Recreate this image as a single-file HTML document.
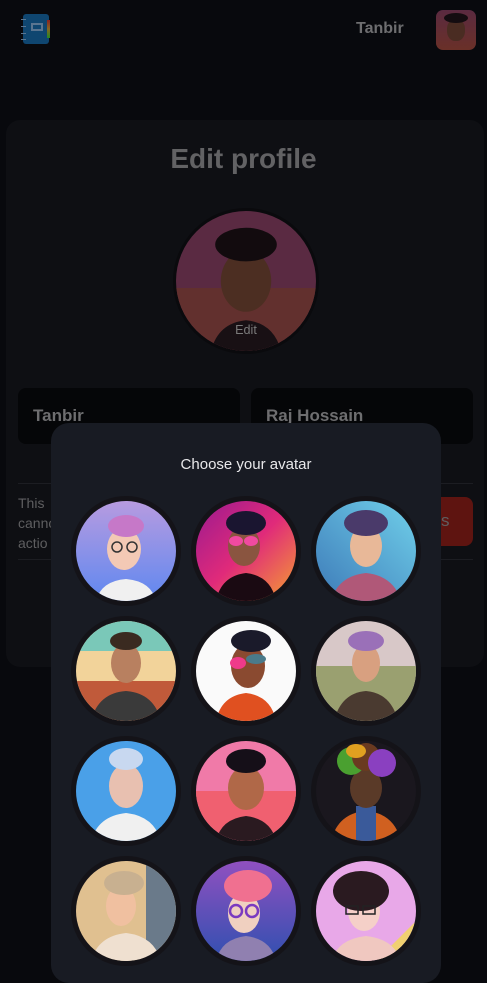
<!DOCTYPE html>
<html><head><meta charset="utf-8"><style>
*{margin:0;padding:0;box-sizing:border-box}
body{width:487px;height:963px;background:#08090d;font-family:"Liberation Sans",sans-serif;position:relative;overflow:hidden}
.abs{position:absolute}
.card{left:6px;top:120px;width:478px;height:547px;background:#0e0f13;border-radius:14px}
.inp{background:#050608;border-radius:8px;height:56px;top:388px;color:#6e6e70;font-weight:bold;font-size:17px;padding:18px 15px}
.line{height:1px;background:#1c1d22;left:18px;width:455px}
.modal{left:51px;top:423px;width:390px;height:560px;background:#181b23;border-radius:18px}
.av{position:absolute;width:110px;height:110px;border-radius:50%;background:#141318;padding:5px}
.av svg{width:100px;height:100px;display:block;border-radius:50%}
</style></head><body>
<!-- header -->
<div class="abs" style="left:23px;top:14px;width:26px;height:30px;background:#0f4670;border-radius:3px"></div>
<div class="abs" style="left:47px;top:20px;width:3px;height:18px;background:linear-gradient(#822,#862,#282)"></div>
<div class="abs" style="left:31px;top:23px;width:12px;height:8px;border:2px solid #5a7590"></div>
<div class="abs" style="left:21px;top:19px;width:5px;height:1px;background:#5a7590;box-shadow:0 7px #5a7590,0 14px #5a7590,0 20px #5a7590"></div>
<div class="abs" style="left:356px;top:20px;color:#6e6e70;font-weight:bold;font-size:16px">Tanbir</div>
<div class="abs" style="left:436px;top:10px;width:40px;height:40px;border-radius:7px;overflow:hidden;background:linear-gradient(#5a2a40,#6a3028)">
<div class="abs" style="left:11px;top:9px;width:18px;height:22px;border-radius:45%;background:#4a2c22"></div>
<div class="abs" style="left:8px;top:3px;width:24px;height:10px;border-radius:50%;background:#140c10"></div></div>
<!-- card -->
<div class="abs card"></div>
<div class="abs" style="left:0;width:487px;top:143px;text-align:center;color:#626264;font-weight:bold;font-size:28px">Edit profile</div>
<div class="abs" style="left:173px;top:208px;width:146px;height:146px;border-radius:50%;background:#0a0a0d;padding:3px">
<svg width="140" height="140" viewBox="0 0 100 100" style="border-radius:50%;display:block"><rect width="100" height="100" fill="#5a2a42"/><rect y="55" width="100" height="45" fill="#62302e"/><path d="M25 100 Q30 80 50 78 Q70 80 75 100Z" fill="#181014"/><ellipse cx="50" cy="50" rx="18" ry="22" fill="#4c2e22"/><ellipse cx="50" cy="24" rx="22" ry="12" fill="#120b0e"/><text x="50" y="88" font-size="9" fill="#7a7a7a" text-anchor="middle" font-family="Liberation Sans">Edit</text></svg></div>
<div class="abs inp" style="left:18px;width:222px">Tanbir</div>
<div class="abs inp" style="left:251px;width:222px">Raj Hossain</div>
<div class="abs line" style="top:483px"></div>
<div class="abs line" style="top:559px"></div>
<div class="abs" style="left:18px;top:493px;color:#5e5e60;font-size:14px;line-height:20px">This<br>canno<br>actio</div>
<div class="abs" style="left:441px;top:497px;width:32px;height:49px;background:#5e1410;border-radius:0 8px 8px 0;color:#5e5e60;font-size:17px;padding:14px 0 0 0">s</div>
<!-- modal -->
<div class="abs modal"></div>
<div class="abs" style="left:51px;width:390px;top:456px;text-align:center;color:#e8e8ea;font-size:15px">Choose your avatar</div>

<div class="av" style="left:71px;top:496px"><svg viewBox="0 0 100 100"><defs><linearGradient id="g1" x1="0" y1="0" x2="0" y2="1"><stop offset="0" stop-color="#b79be0"/><stop offset="1" stop-color="#5f88f0"/></linearGradient></defs><rect width="100" height="100" fill="url(#g1)"/><path d="M20 100 Q25 80 50 78 Q75 80 80 100Z" fill="#f0f0f0"/><ellipse cx="48" cy="48" rx="17" ry="21" fill="#f3c9b5"/><ellipse cx="50" cy="25" rx="18" ry="11" fill="#c678c8"/><circle cx="41" cy="46" r="5" fill="none" stroke="#333" stroke-width="1.5"/><circle cx="56" cy="46" r="5" fill="none" stroke="#333" stroke-width="1.5"/></svg></div>
<div class="av" style="left:191px;top:496px"><svg viewBox="0 0 100 100"><defs><linearGradient id="g2" x1="0" y1="0" x2="1" y2="1"><stop offset="0" stop-color="#9a1a90"/><stop offset=".5" stop-color="#e02a7a"/><stop offset="1" stop-color="#f5a030"/></linearGradient></defs><rect width="100" height="100" fill="url(#g2)"/><path d="M20 100 Q25 75 50 72 Q75 75 80 100Z" fill="#1a0a12"/><ellipse cx="48" cy="45" rx="16" ry="20" fill="#8a5540"/><ellipse cx="50" cy="22" rx="20" ry="12" fill="#1a1530"/><ellipse cx="40" cy="40" rx="7" ry="5" fill="#f04aa0"/><ellipse cx="55" cy="40" rx="7" ry="5" fill="#f04aa0"/></svg></div>
<div class="av" style="left:311px;top:496px"><svg viewBox="0 0 100 100"><defs><linearGradient id="g3" x1="0" y1="1" x2="1" y2="0"><stop offset="0" stop-color="#3d7ab8"/><stop offset="1" stop-color="#70d0ea"/></linearGradient></defs><rect width="100" height="100" fill="url(#g3)"/><path d="M15 100 Q22 75 50 72 Q78 75 85 100Z" fill="#b05878"/><ellipse cx="50" cy="45" rx="16" ry="21" fill="#e8b898"/><ellipse cx="50" cy="22" rx="22" ry="13" fill="#4a3a6a"/></svg></div>

<div class="av" style="left:71px;top:616px"><svg viewBox="0 0 100 100"><rect width="100" height="100" fill="#f2d39a"/><rect width="100" height="30" fill="#7ac8b8"/><rect y="60" width="100" height="40" fill="#c05a3a"/><path d="M15 100 Q22 72 50 70 Q78 72 85 100Z" fill="#3a3a3a"/><ellipse cx="50" cy="42" rx="15" ry="20" fill="#b88060"/><ellipse cx="50" cy="20" rx="16" ry="9" fill="#3a2a20"/></svg></div>
<div class="av" style="left:191px;top:616px"><svg viewBox="0 0 100 100"><rect width="100" height="100" fill="#fafafa"/><path d="M20 100 Q25 75 50 72 Q75 75 80 100Z" fill="#e05020"/><ellipse cx="52" cy="45" rx="17" ry="22" fill="#8a4a30"/><ellipse cx="55" cy="20" rx="20" ry="11" fill="#1a1a2a"/><ellipse cx="42" cy="42" rx="8" ry="6" fill="#f03a8a"/><ellipse cx="60" cy="38" rx="10" ry="5" fill="#4a7a8a"/></svg></div>
<div class="av" style="left:311px;top:616px"><svg viewBox="0 0 100 100"><rect width="100" height="100" fill="#d8c8c8"/><rect y="45" width="100" height="55" fill="#9aa070"/><path d="M18 100 Q25 72 50 70 Q75 72 82 100Z" fill="#4a3a30"/><ellipse cx="50" cy="42" rx="14" ry="19" fill="#d8a080"/><ellipse cx="50" cy="20" rx="18" ry="10" fill="#9a70b8"/></svg></div>

<div class="av" style="left:71px;top:736px"><svg viewBox="0 0 100 100"><rect width="100" height="100" fill="#4aa0e8"/><path d="M15 100 Q22 75 50 72 Q78 75 85 100Z" fill="#f0f0f0"/><ellipse cx="50" cy="45" rx="17" ry="22" fill="#e8c0b0"/><ellipse cx="50" cy="18" rx="17" ry="11" fill="#c8d8f0"/></svg></div>
<div class="av" style="left:191px;top:736px"><svg viewBox="0 0 100 100"><rect width="100" height="100" fill="#f07aa8"/><rect y="50" width="100" height="50" fill="#f06070"/><path d="M20 100 Q25 78 50 75 Q75 78 80 100Z" fill="#2a1a20"/><ellipse cx="50" cy="47" rx="18" ry="22" fill="#b06848"/><ellipse cx="50" cy="20" rx="20" ry="12" fill="#150f18"/></svg></div>
<div class="av" style="left:311px;top:736px"><svg viewBox="0 0 100 100"><rect width="100" height="100" fill="#1a171e"/><path d="M15 100 Q22 72 50 70 Q78 72 85 100Z" fill="#d06020"/><rect x="40" y="65" width="20" height="35" fill="#3a5a9a"/><ellipse cx="50" cy="47" rx="16" ry="20" fill="#5a3a28"/><ellipse cx="35" cy="20" rx="14" ry="14" fill="#4aa030"/><ellipse cx="50" cy="16" rx="14" ry="14" fill="#6a3a20"/><ellipse cx="66" cy="22" rx="14" ry="14" fill="#8a40c0"/><ellipse cx="40" cy="10" rx="10" ry="7" fill="#e0a020"/></svg></div>

<div class="av" style="left:71px;top:856px"><svg viewBox="0 0 100 100"><rect width="100" height="100" fill="#e0c090"/><rect x="70" width="30" height="100" fill="#6a7a8a"/><path d="M15 100 Q22 75 50 72 Q78 75 85 100Z" fill="#efe0d0"/><ellipse cx="45" cy="45" rx="15" ry="20" fill="#f0c0a0"/><ellipse cx="48" cy="22" rx="20" ry="12" fill="#c8b090"/></svg></div>
<div class="av" style="left:191px;top:856px"><svg viewBox="0 0 100 100"><defs><linearGradient id="g11" x1="0" y1="0" x2="0" y2="1"><stop offset="0" stop-color="#9050c0"/><stop offset="1" stop-color="#3050b0"/></linearGradient></defs><rect width="100" height="100" fill="url(#g11)"/><path d="M20 100 Q25 78 50 75 Q75 78 80 100Z" fill="#9080b0"/><ellipse cx="48" cy="52" rx="16" ry="20" fill="#f0d0c0"/><ellipse cx="52" cy="25" rx="24" ry="16" fill="#f07090"/><circle cx="40" cy="50" r="6" fill="none" stroke="#7a3ac0" stroke-width="2.5"/><circle cx="56" cy="50" r="6" fill="none" stroke="#7a3ac0" stroke-width="2.5"/></svg></div>
<div class="av" style="left:311px;top:856px"><svg viewBox="0 0 100 100"><rect width="100" height="100" fill="#e8a8e8"/><path d="M60 100 L100 60 L100 80 L80 100Z" fill="#f0d070"/><path d="M15 100 Q22 78 50 75 Q78 78 85 100Z" fill="#f0c8c0"/><ellipse cx="48" cy="50" rx="16" ry="20" fill="#f5d0c8"/><ellipse cx="45" cy="30" rx="28" ry="20" fill="#2a1a20"/><rect x="30" y="45" width="12" height="8" fill="none" stroke="#222" stroke-width="1.5"/><rect x="47" y="45" width="12" height="8" fill="none" stroke="#222" stroke-width="1.5"/></svg></div>
</body></html>
